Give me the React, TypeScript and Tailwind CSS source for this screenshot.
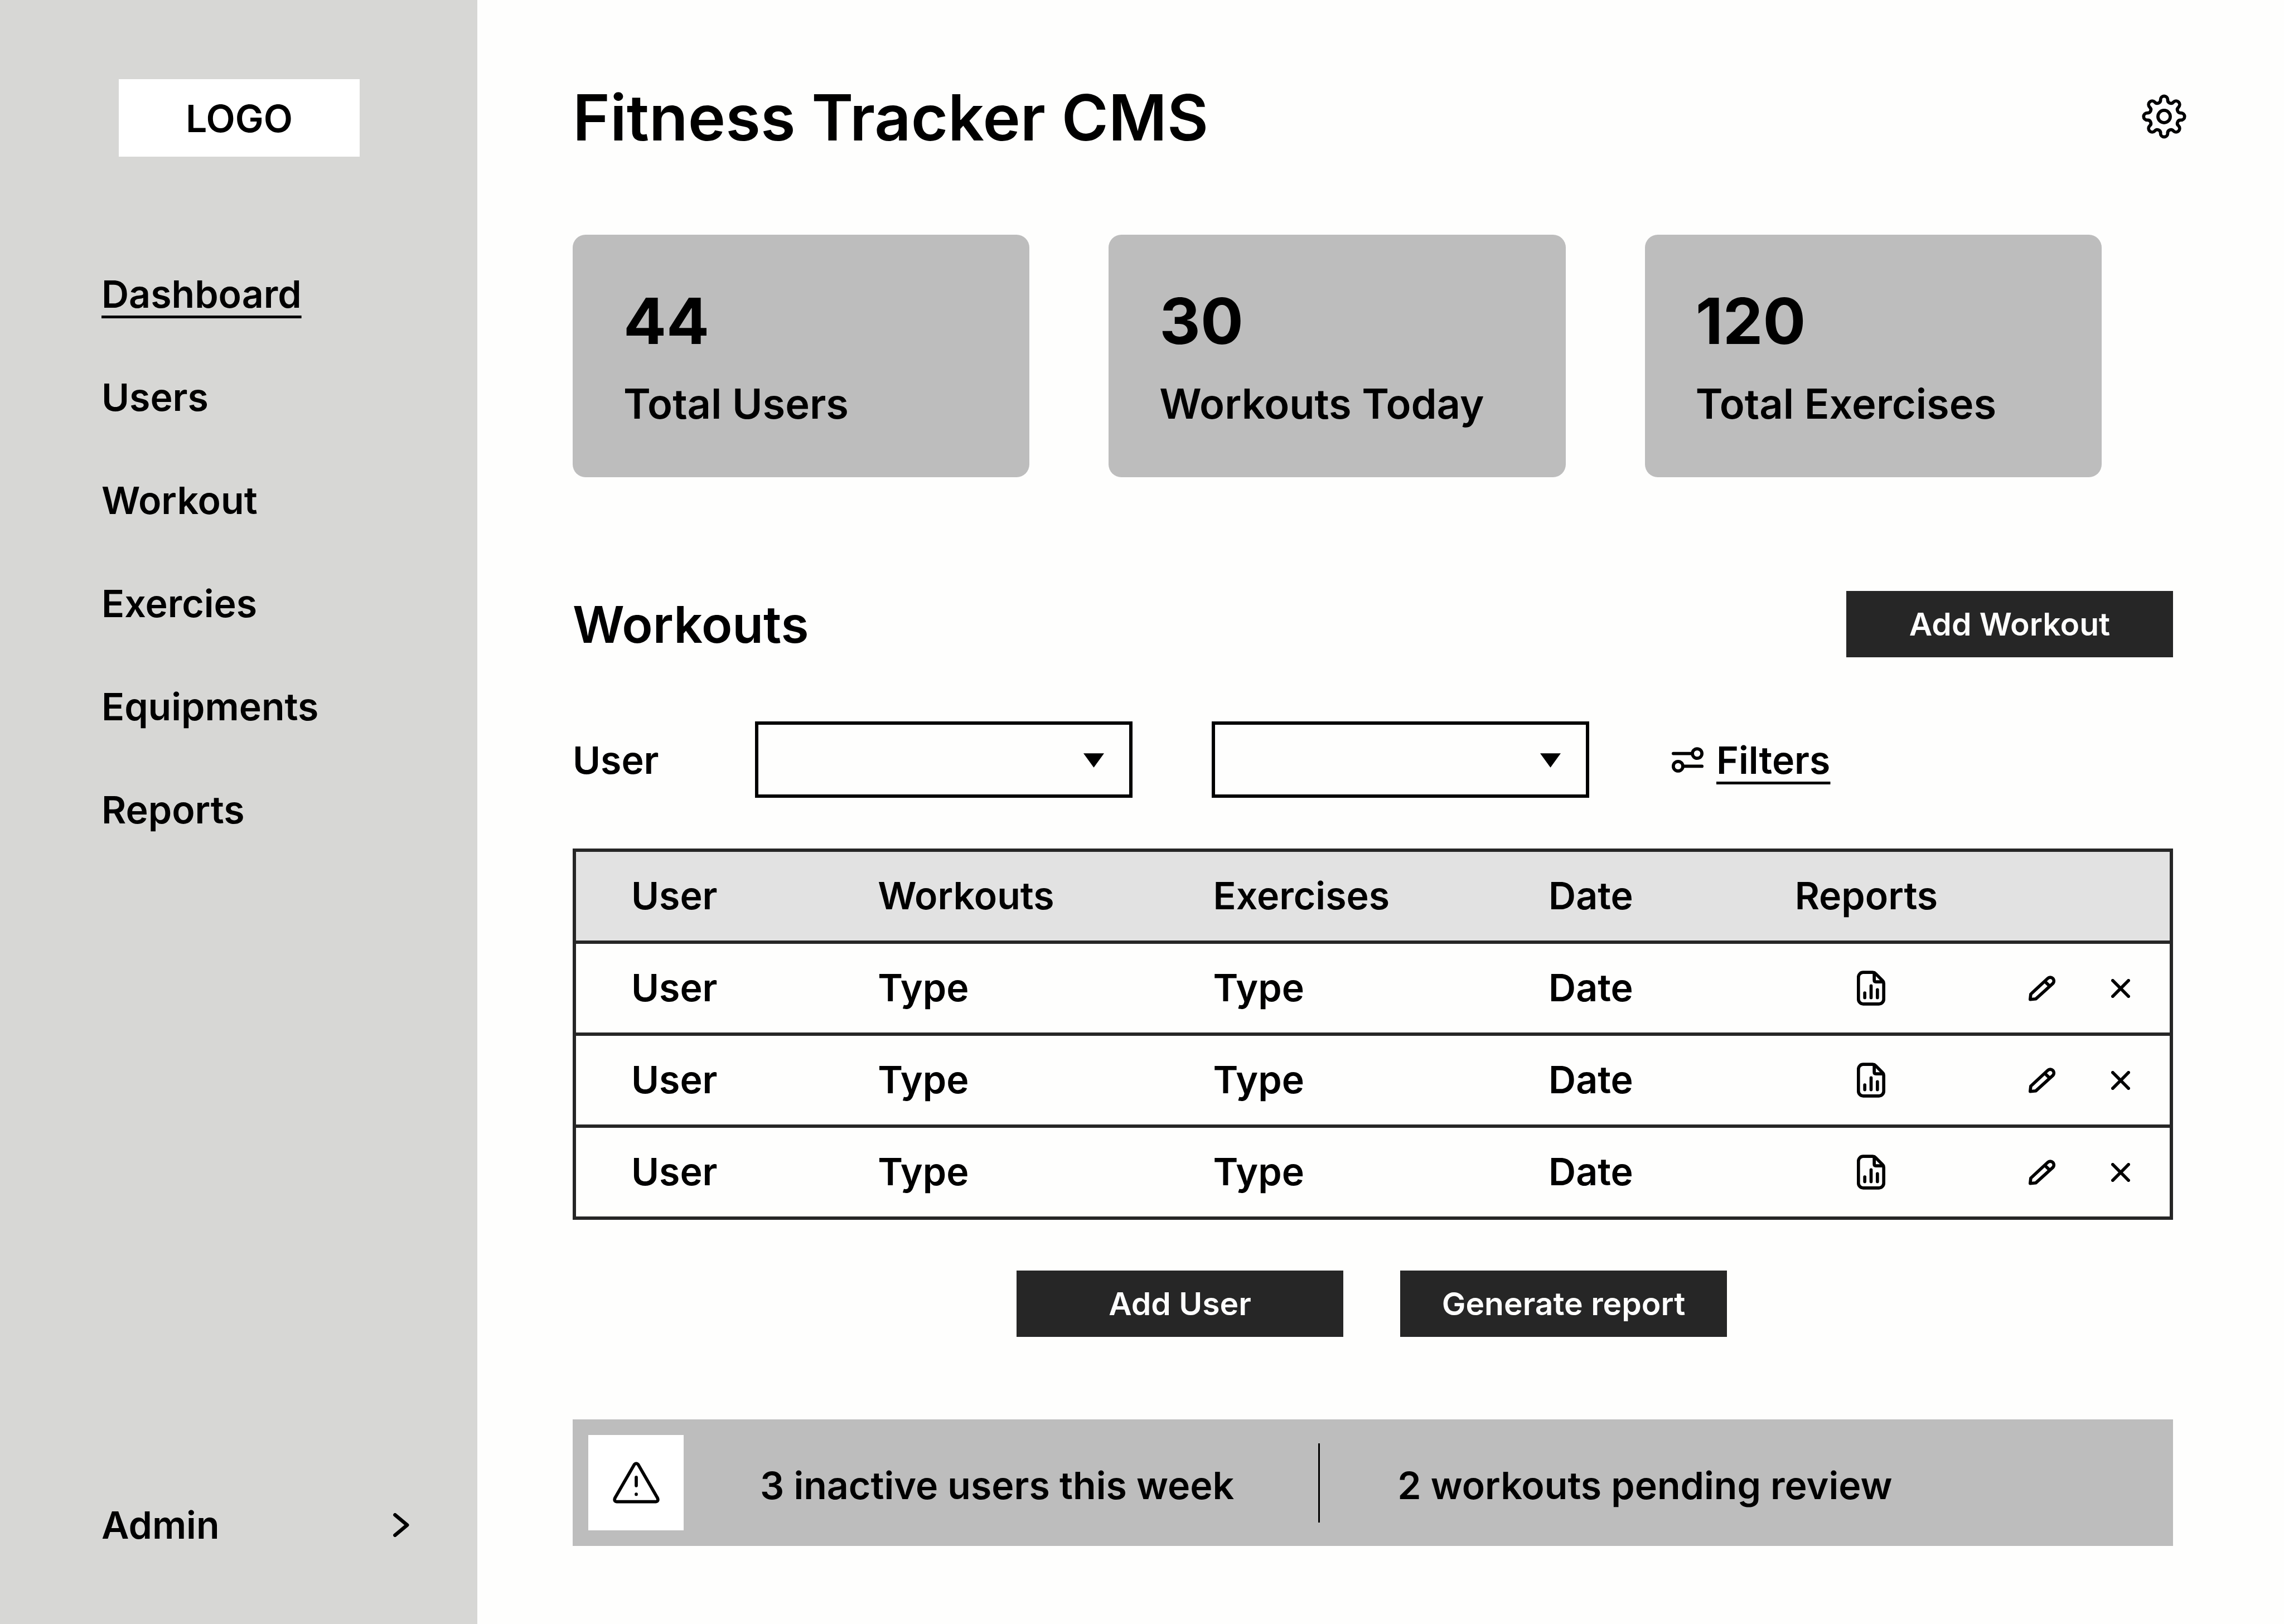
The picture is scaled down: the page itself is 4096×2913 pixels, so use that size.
const LOBES = 8;

function gearOutline() {
  const point = (radius: number, degrees: number) => {
    const a = ((degrees - 90) * Math.PI) / 180;
    return `${(60 + radius * Math.cos(a)).toFixed(2)} ${(60 + radius * Math.sin(a)).toFixed(2)}`;
  };
  const step = 360 / LOBES;
  let d = `M${point(43.35, -12)}`;
  for (let i = 0; i < LOBES; i++) {
    d += `A9 9 0 0 1 ${point(43.35, i * step + 12)}`;
    d += `A8.2 8.2 0 0 0 ${point(43.35, (i + 1) * step - 12)}`;
  }
  return d + "Z";
}

const stroke = {
  fill: "none",
  stroke: "currentColor",
  strokeWidth: 8,
  strokeLinecap: "round" as const,
  strokeLinejoin: "round" as const,
};

const GearIcon = () => (
  <svg viewBox="4 4 112 112" className="size-20" aria-hidden="true" {...stroke}>
    <path d={gearOutline()} />
    <circle cx="60" cy="60" r="15.5" />
  </svg>
);

const FiltersIcon = () => (
  <svg viewBox="0 0 80 64" className="h-[46px] w-[57px]" aria-hidden="true" {...stroke}>
    <path d="M4 16H52M28 48H76" />
    <circle cx="64" cy="16" r="12" />
    <circle cx="16" cy="48" r="12" />
  </svg>
);

const ReportIcon = () => (
  <svg viewBox="0 0 72 88" className="h-[63px] w-[51px]" aria-hidden="true" {...stroke}>
    <path d="M16 4H40Q44 4 47 7L65 25Q68 28 68 32V72A12 12 0 0 1 56 84H16A12 12 0 0 1 4 72V16A12 12 0 0 1 16 4Z" />
    <path d="M44 5V24Q44 28 48 28H67M20 56V68M36 38V68M52 48V68" />
  </svg>
);

const PencilIcon = () => (
  <svg viewBox="0 0 68 64" className="h-[46px] w-[48px]" aria-hidden="true" {...stroke}>
    <path d="M4 60L5.500 46.500L48.500 6.500A9 9 0 0 1 61.500 19.500L18.500 58.500ZM41 14L53 25.500" />
  </svg>
);

const CrossIcon = () => (
  <svg viewBox="0 0 48 48" className="size-[34px]" aria-hidden="true" {...stroke}>
    <path d="M4 4L44 44M44 4L4 44" />
  </svg>
);

const ChevronIcon = () => (
  <svg viewBox="0 0 40 60" className="h-[43px] w-[29px]" aria-hidden="true" {...stroke} strokeWidth="9">
    <path d="M4.500 4.500L35 30L4.500 55.500" />
  </svg>
);

const WarningIcon = () => (
  <svg viewBox="0 0 118 105" className="h-[75px] w-[84px]" aria-hidden="true" {...stroke}>
    <path d="M54 7Q59 1 64 7L112.500 91Q116 99.500 108 100.500H10Q2 99.500 5.500 91Z" />
    <path d="M59 39V60M59 81.500V82" />
  </svg>
);

const navItems = ["Dashboard", "Users", "Workout", "Exercies", "Equipments", "Reports"];

const stats = [
  { value: "44", label: "Total Users" },
  { value: "30", label: "Workouts Today" },
  { value: "120", label: "Total Exercises" },
];

const workouts = [1, 2, 3].map((id) => ({
  id,
  user: "User",
  workout: "Type",
  exercise: "Type",
  date: "Date",
}));

const linkUnderline = "underline decoration-[5px] underline-offset-[14px]";

function DarkButton({ children }: { children: string }) {
  return (
    <button type="button" className="h-[119px] w-[586px] bg-[#262626] text-[57px] leading-[69px] text-[#fefefd]">
      {children}
    </button>
  );
}

function Dropdown({ id, label }: { id: string; label: string }) {
  return (
    <div className="relative w-[677px]">
      <select
        id={id}
        aria-label={label}
        className="block h-[137px] w-full appearance-none rounded-none border-6 border-black bg-transparent px-8"
      >
        <option value=""></option>
      </select>
      <svg
        viewBox="0 0 52 36"
        aria-hidden="true"
        className="pointer-events-none absolute top-[57px] right-[51px] h-[26px] w-[37px]"
      >
        <path d="M0 0H52L26 36Z" />
      </svg>
    </div>
  );
}

function Sidebar() {
  return (
    <aside className="flex w-[856px] shrink-0 flex-col bg-[#d7d7d5] pt-[142px] pb-[137px]">
      <div className="ml-[213px] flex h-[139px] w-[432px] items-center justify-center bg-white">LOGO</div>
      <nav className="mt-[205px] flex flex-col items-start gap-[103px] pl-[182px]">
        {navItems.map((item) => (
          <a key={item} href="#" className={item === "Dashboard" ? linkUnderline : ""}>
            {item}
          </a>
        ))}
      </nav>
      <button type="button" className="mt-auto flex items-center justify-between pr-[122px] pl-[182px]">
        Admin
        <ChevronIcon />
      </button>
    </aside>
  );
}

function WorkoutTable() {
  return (
    <table className="mt-[91px] mr-6 table-fixed border-collapse border-6 border-[#262626] text-left">
      <colgroup>
        <col className="w-[19%]" />
        <col className="w-[21%]" />
        <col className="w-[21%]" />
        <col className="w-[15%]" />
        <col className="w-[10%]" />
        <col />
      </colgroup>
      <thead>
        <tr className="h-[165px] border-b-6 border-[#262626] bg-[#e2e2e2]">
          <th className="pb-1 pl-[99px] font-semibold">User</th>
          <th className="pb-1 font-semibold">Workouts</th>
          <th className="pb-1 font-semibold">Exercises</th>
          <th className="pb-1 font-semibold">Date</th>
          <th className="pb-1 pl-3 font-semibold">Reports</th>
          <td />
        </tr>
      </thead>
      <tbody>
        {workouts.map((row) => (
          <tr key={row.id} className="h-[165px] border-b-6 border-[#262626]">
            <td className="pb-1 pl-[99px]">{row.user}</td>
            <td className="pb-1">{row.workout}</td>
            <td className="pb-1">{row.exercise}</td>
            <td className="pb-1">{row.date}</td>
            <td className="pl-3">
              <button type="button" aria-label="Open report" className="mx-auto block">
                <ReportIcon />
              </button>
            </td>
            <td>
              <div className="flex items-center justify-end gap-[100px] pr-[71px]">
                <button type="button" aria-label="Edit">
                  <PencilIcon />
                </button>
                <button type="button" aria-label="Delete">
                  <CrossIcon />
                </button>
              </div>
            </td>
          </tr>
        ))}
      </tbody>
    </table>
  );
}

export default function App() {
  return (
    <div className="flex min-h-screen bg-[#fefefd] font-[Inter,sans-serif] text-[68px] leading-[82px] font-semibold text-black">
      <Sidebar />
      <main className="flex flex-1 flex-col pt-[142px] pr-[175px] pb-[138px] pl-[171px]">
        <header className="flex items-center justify-between">
          <h1 className="text-[114px] leading-[138px]">Fitness Tracker CMS</h1>
          <button type="button" aria-label="Settings" className="pb-1">
            <GearIcon />
          </button>
        </header>

        <section className="mt-[141px] mr-[152px] grid grid-cols-3 gap-[142px]">
          {stats.map((stat) => (
            <div key={stat.label} className="flex flex-col gap-[34px] rounded-[23px] bg-[#bdbdbd] px-[91px] pt-[86px] pb-[87px]">
              <p className="text-[114px] leading-[138px] font-bold">{stat.value}</p>
              <p className="text-[74px] leading-[90px]">{stat.label}</p>
            </div>
          ))}
        </section>

        <div className="mt-[204px] mr-6 flex items-center justify-between">
          <h2 className="text-[91px] leading-[110px]">Workouts</h2>
          <DarkButton>Add Workout</DarkButton>
        </div>

        <div className="mt-[115px] flex items-center">
          <label htmlFor="user-filter" className="w-[327px]">
            User
          </label>
          <div className="flex gap-[142px]">
            <Dropdown id="user-filter" label="User" />
            <Dropdown id="workout-filter" label="Workout" />
          </div>
          <a href="#" className="ml-[148px] flex items-center gap-[23px]">
            <FiltersIcon />
            <span className={linkUnderline}>Filters</span>
          </a>
        </div>

        <WorkoutTable />

        <div className="mt-[91px] mr-7 flex justify-center gap-[102px]">
          <DarkButton>Add User</DarkButton>
          <DarkButton>Generate report</DarkButton>
        </div>

        <section className="mt-[148px] mr-6 flex items-center bg-[#bdbdbd] px-7 py-7">
          <div className="flex size-[171px] items-center justify-center bg-white">
            <WarningIcon />
          </div>
          <p className="pt-2 pl-[137px]">3 inactive users this week</p>
          <div className="ml-[151px] h-[142px] w-[3px] bg-black" />
          <p className="pt-2 pl-[139px]">2 workouts pending review</p>
        </section>
      </main>
    </div>
  );
}
